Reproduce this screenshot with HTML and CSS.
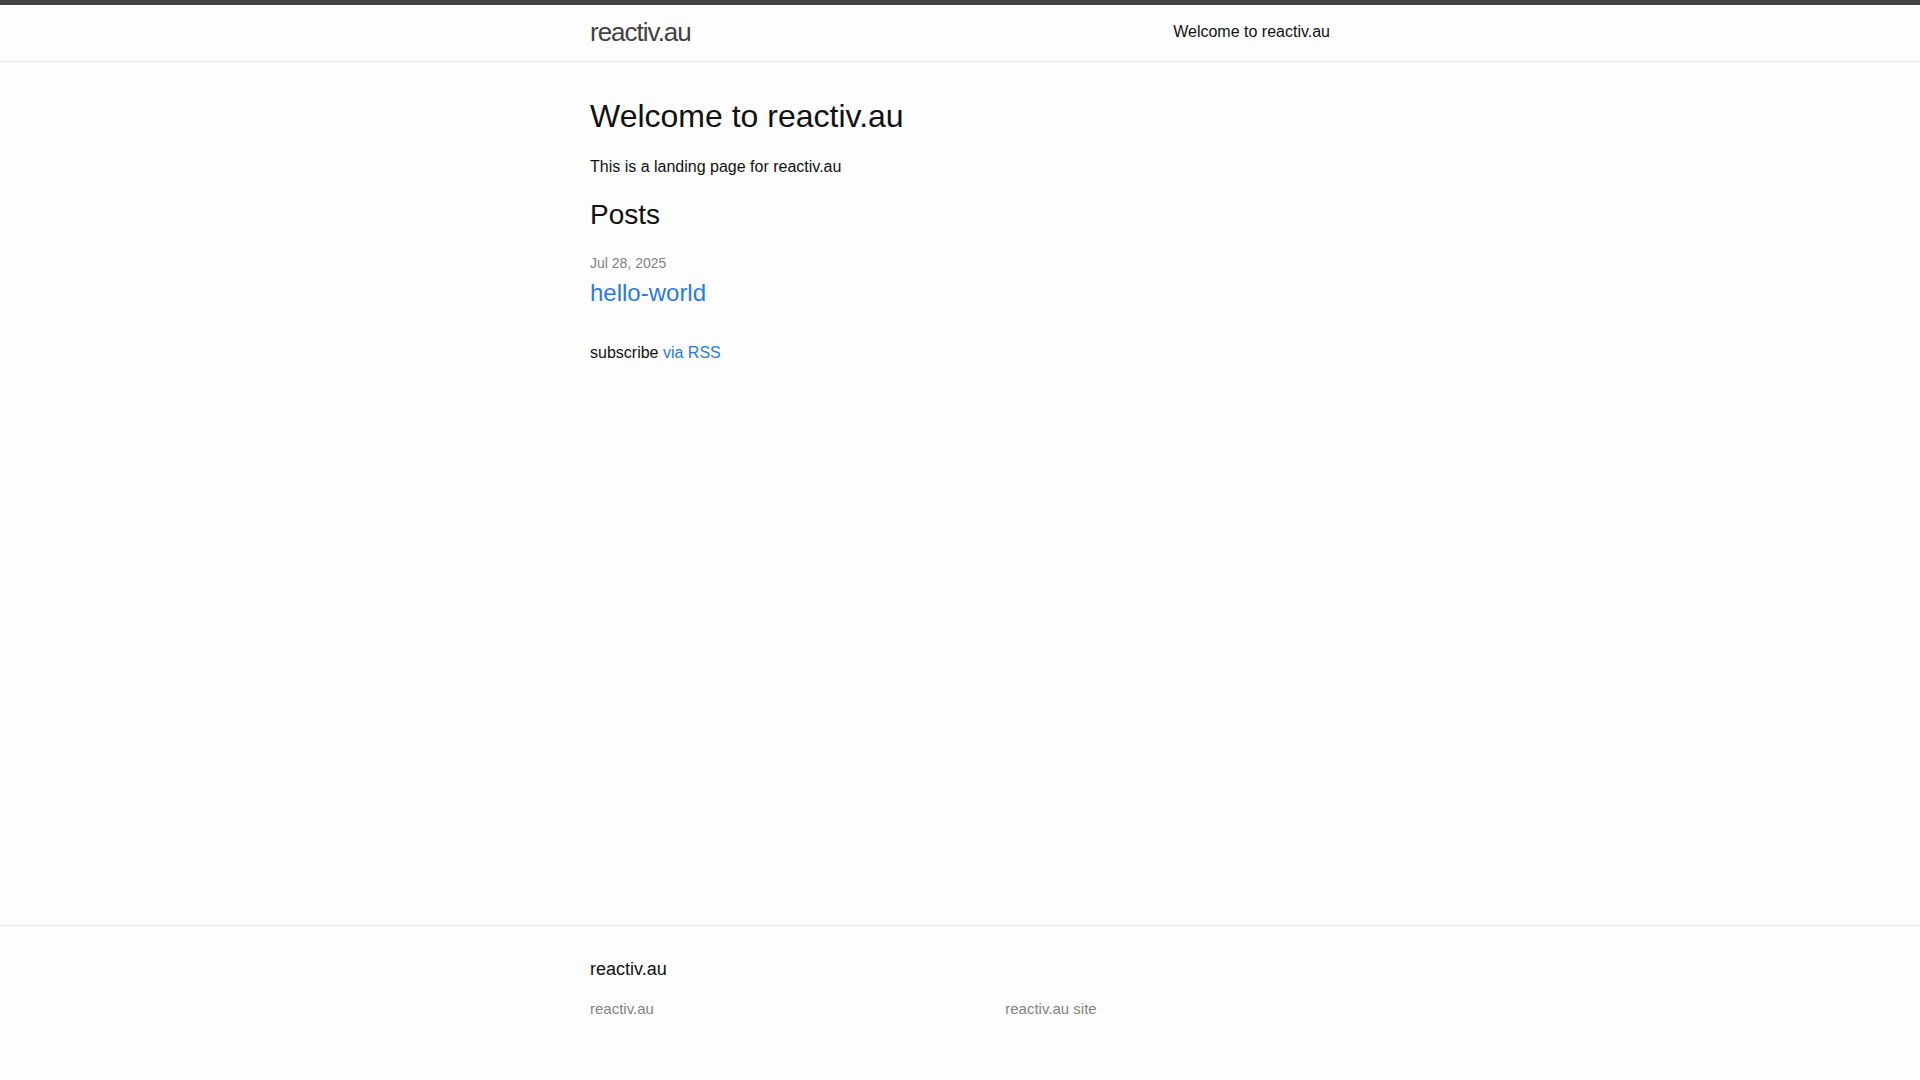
FILE: index.html
```html
<!DOCTYPE html>
<html lang="en">
<head>
<meta charset="utf-8">
<title>reactiv.au</title>
<link rel="stylesheet" href="styles.css">
</head>
<body>
<header class="site-header">
  <div class="wrapper header-row">
    <a class="site-title" href="#">reactiv.au</a>
    <nav class="site-nav">
      <a class="page-link" href="#">Welcome to reactiv.au</a>
    </nav>
  </div>
</header>
<main class="page-content">
  <div class="wrapper">
    <h1 class="page-heading">Welcome to reactiv.au</h1>
    <p>This is a landing page for reactiv.au</p>
    <h2 class="post-list-heading">Posts</h2>
    <ul class="post-list">
      <li>
        <span class="post-meta">Jul 28, 2025</span>
        <h3><a class="post-link" href="#">hello-world</a></h3>
      </li>
    </ul>
    <p class="rss-subscribe">subscribe <a href="#">via RSS</a></p>
  </div>
</main>
<footer class="site-footer">
  <div class="wrapper">
    <h2 class="footer-heading">reactiv.au</h2>
    <div class="footer-col-wrapper">
      <div class="footer-col footer-col-1">
        <ul class="contact-list">
          <li>reactiv.au</li>
        </ul>
      </div>
      <div class="footer-col footer-col-2"></div>
      <div class="footer-col footer-col-3">
        <p>reactiv.au site</p>
      </div>
    </div>
  </div>
</footer>
</body>
</html>
```

FILE: styles.css
```css
html, body {
  margin: 0;
  padding: 0;
}
body {
  font: 400 16px/1.5 "Liberation Sans", Arial, sans-serif;
  color: #111111;
  background-color: #fdfdfd;
  min-height: 100vh;
  display: flex;
  flex-direction: column;
}
h1, h2, h3, h4, h5, h6, p, ul {
  margin: 0 0 15px 0;
  padding: 0;
}
h1, h2, h3 {
  font-weight: 400;
}
a {
  color: #2a7ae2;
  text-decoration: none;
}
.wrapper {
  max-width: 740px;
  margin: 0 auto;
  padding: 0 30px;
  width: 100%;
  box-sizing: content-box;
}
.site-header {
  border-top: 5px solid #424242;
  border-bottom: 1px solid #e8e8e8;
  min-height: 55.95px;
}
.header-row {
  display: flex;
  justify-content: space-between;
  align-items: flex-start;
}
.site-title {
  font-size: 26px;
  font-weight: 300;
  line-height: 54px;
  letter-spacing: -1px;
  color: #424242;
}
.site-nav {
  line-height: 54px;
}
.page-link {
  color: #111111;
  line-height: 1.5;
}
.page-content {
  padding: 30px 0;
  flex: 1;
}
.page-heading {
  font-size: 32px;
}
.post-list-heading {
  font-size: 28px;
}
.post-list {
  list-style: none;
  margin-left: 0;
}
.post-list > li {
  margin-bottom: 30px;
}
.post-meta {
  font-size: 14px;
  color: #828282;
}
.post-link {
  display: block;
  font-size: 24px;
}
.site-footer {
  border-top: 1px solid #e8e8e8;
  padding: 30px 0;
}
.footer-heading {
  font-size: 18px;
  margin-bottom: 15px;
}
.footer-col-wrapper {
  font-size: 15px;
  color: #828282;
  margin-left: -15px;
  display: flex;
}
.footer-col {
  margin-bottom: 15px;
  padding-left: 15px;
}
.footer-col-1 { width: calc(35% - 15px); }
.footer-col-2 { width: calc(20% - 15px); }
.footer-col-3 { width: calc(45% - 15px); }
.contact-list {
  list-style: none;
  margin-left: 0;
}
```
